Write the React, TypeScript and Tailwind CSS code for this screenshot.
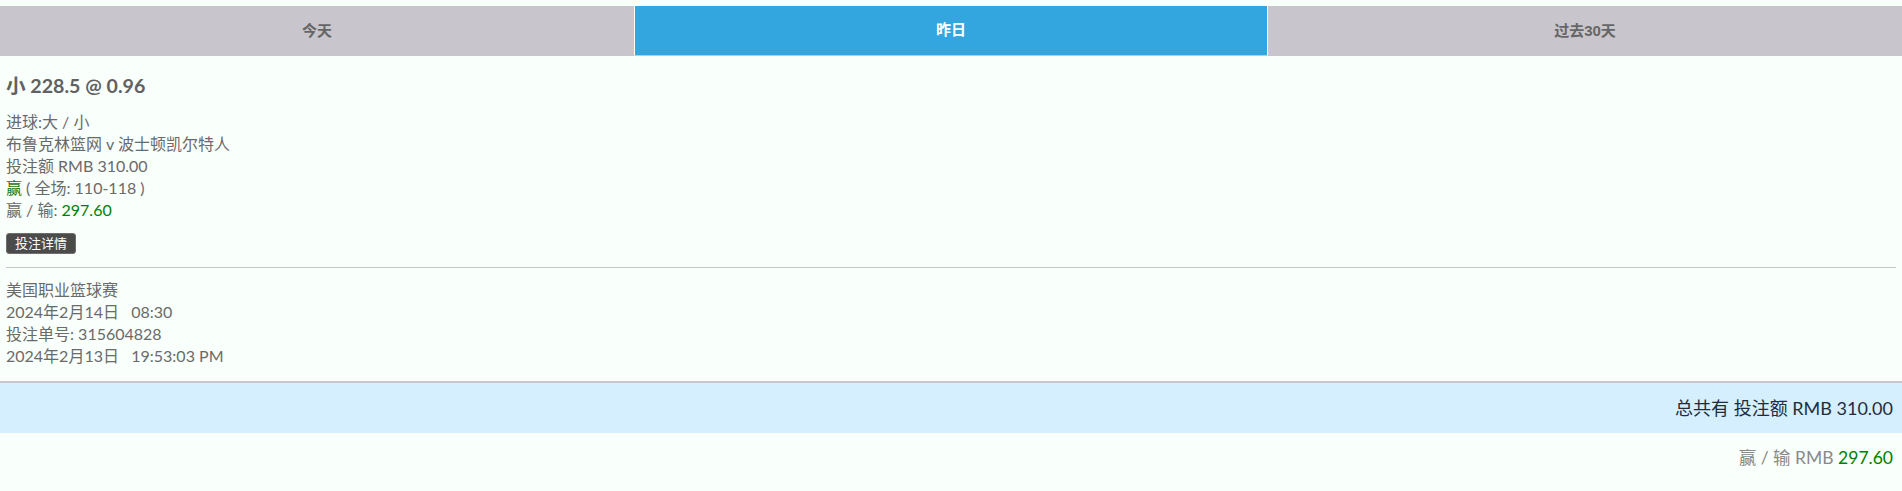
import React, { useState } from 'react';

const tabs = ['今天', '昨日', '过去30天'];

const lato = { fontFamily: 'Lato, "Noto Sans CJK SC", sans-serif' };

const BetCard: React.FC = () => {
    return (
        <div className="px-[6px]">
            <div className="mt-[18px] text-[19.6px] leading-[24px] font-bold text-[#616161]">小 228.5 @ 0.96</div>
            <div className="mt-[13px] text-[16px] leading-[22px] text-[#6a6a6a]">
                <div>进球:大 / 小</div>
                <div>布鲁克林篮网 v 波士顿凯尔特人</div>
                <div>投注额 RMB 310.00</div>
                <div><span className="text-[#137a13]">赢</span> ( 全场: 110-118 )</div>
                <div>赢 / 输: <span className="text-[#008000]">297.60</span></div>
            </div>
            <button className="mt-[12px] h-[21px] px-[8px] rounded-[3px] bg-[#4b4b4b] border border-[#6e6e6e] text-white text-[13px] leading-[19px]">
                投注详情
            </button>
            <div className="mt-[13px] border-t border-[#c9c7cd]" />
            <div className="mt-[11px] text-[16px] leading-[22px] text-[#6a6a6a]">
                <div>美国职业篮球赛</div>
                <div>2024年2月14日&nbsp;&nbsp;&nbsp;08:30</div>
                <div>投注单号: 315604828</div>
                <div>2024年2月13日&nbsp;&nbsp;&nbsp;19:53:03 PM</div>
            </div>
        </div>
    );
};

export default function App() {
    const [active, setActive] = useState(1);

    return (
        <div className="min-h-screen bg-[#f9fffb]" style={lato}>
            <div className="pt-[6px]">
                <div className="grid grid-cols-3 h-[50px]" style={{ fontFamily: '"Liberation Sans", "Noto Sans CJK SC", sans-serif' }}>
                    {tabs.map((t, i) => (
                        <button
                            key={t}
                            onClick={() => setActive(i)}
                            className={i === active
                                ? 'bg-[#34a6df] text-white font-bold text-[15px] border-x border-white border-b border-b-[#c9c7cd]'
                                : 'bg-[#c8c5cc] text-[#666666] font-bold text-[15px]'}
                        >
                            {t}
                        </button>
                    ))}
                </div>
            </div>

            <BetCard />

            <div className="mt-[14px] border-t-2 border-[#c9c7cd]" />
            <div className="h-[50px] bg-[#d5effe] flex items-center justify-end pr-[9px] text-[18px] text-[#1f2d3d]">
                总共有 投注额 RMB 310.00
            </div>
            <div className="pt-[14px] pr-[9px] flex justify-end text-[17.5px] leading-[22px] text-[#8a8a8a]">
                <span>赢 / 输 RMB <span className="text-[#008000]">297.60</span></span>
            </div>
        </div>
    );
}
